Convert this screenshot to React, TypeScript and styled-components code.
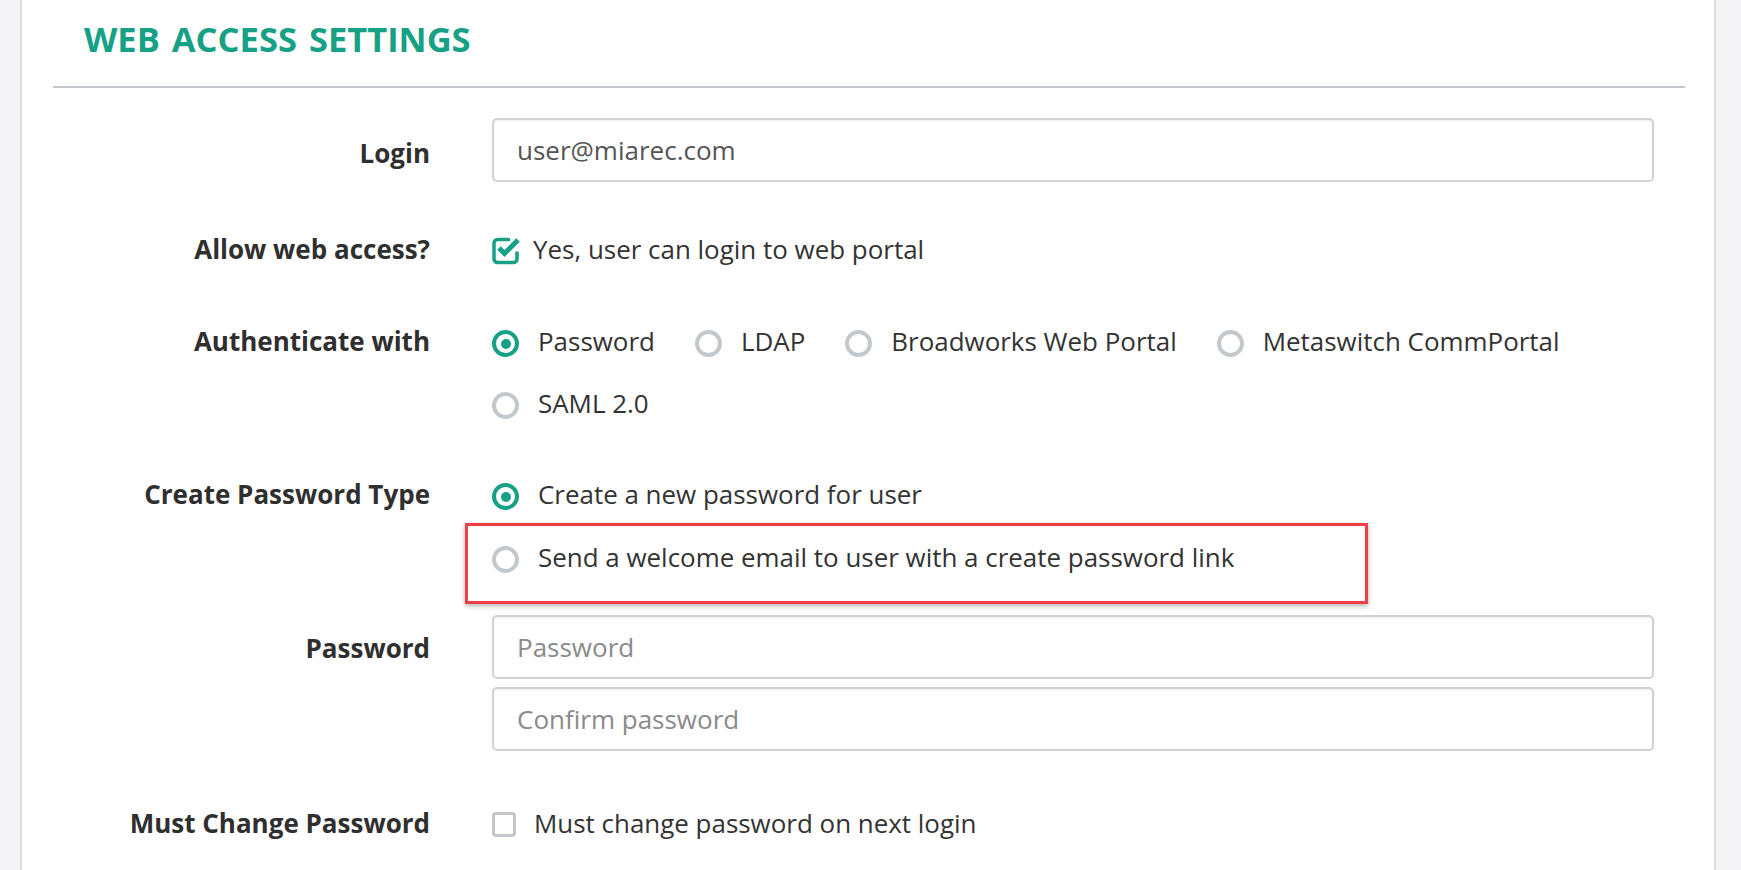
import React from "react";
import styled, { createGlobalStyle } from "styled-components";

const TEAL = "#16a085";
const GREY_RING = "#c3c8cd";

const GlobalStyle = createGlobalStyle`
  html, body {
    margin: 0;
    padding: 0;
    background: #f4f4f6;
  }
  body {
    font-family: "Open Sans", "Liberation Sans", sans-serif;
    color: #333;
  }
`;

const Page = styled.div`
  padding-left: 20px;
  min-height: 870px;
`;

const Panel = styled.div`
  box-sizing: border-box;
  width: 1696px;
  min-height: 870px;
  background: #fff;
  border-left: 2px solid #dedede;
  border-right: 2px solid #dedede;
  padding: 0 29px 0 31px;
  overflow: hidden;
`;

const Heading = styled.h2`
  margin: 15px 0 23px 31px;
  font-size: 34.5px;
  line-height: 48px;
  font-weight: 700;
  color: ${TEAL};
  word-spacing: 3px;
`;

const Divider = styled.div`
  height: 2px;
  background: #c5c9cd;
`;

const Form = styled.div`
  padding-right: 31px;
  padding-top: 30px;
`;

const Row = styled.div<{ $mt?: number }>`
  display: grid;
  grid-template-columns: 377px 1fr;
  column-gap: 62px;
  margin-top: ${(p) => p.$mt ?? 0}px;
`;

const Label = styled.div<{ $pt?: number }>`
  text-align: right;
  font-weight: 700;
  font-size: 26px;
  line-height: 36px;
  color: #2f2f2f;
  padding-top: ${(p) => p.$pt ?? 0}px;
`;

const TextInput = styled.input`
  display: block;
  box-sizing: border-box;
  width: 100%;
  height: 64px;
  border: 2px solid #d2d2d2;
  border-radius: 5px;
  padding: 0 23px;
  font-family: "Open Sans", "Liberation Sans", sans-serif;
  font-size: 26px;
  color: #555;
  background: #fff;
  outline: none;
  box-shadow: inset 0 1px 2px rgba(0, 0, 0, 0.07);

  &::placeholder {
    color: #8a8a8a;
  }
`;

const InputStack = styled.div`
  display: flex;
  flex-direction: column;
  gap: 8px;
`;

const Options = styled.div`
  display: flex;
  flex-wrap: wrap;
  column-gap: 40px;
  row-gap: 26px;
`;

const OptionsColumn = styled.div`
  display: flex;
  flex-direction: column;
  row-gap: 27px;
`;

const Option = styled.label<{ $gap?: number }>`
  position: relative;
  display: flex;
  align-items: flex-start;
  gap: ${(p) => p.$gap ?? 19}px;
  font-size: 25.95px;
  line-height: 36px;
  color: #333;
  white-space: nowrap;
`;

const Radio = styled.span<{ $checked?: boolean }>`
  box-sizing: border-box;
  flex-shrink: 0;
  width: 27px;
  height: 27px;
  margin-top: 7px;
  border-radius: 50%;
  border: 4.5px solid ${(p) => (p.$checked ? TEAL : GREY_RING)};
  display: grid;
  place-items: center;

  &::after {
    content: "";
    width: 10px;
    height: 10px;
    border-radius: 50%;
    background: ${(p) => (p.$checked ? TEAL : "transparent")};
  }
`;

const EmptyBox = styled.span`
  box-sizing: border-box;
  flex-shrink: 0;
  width: 24px;
  height: 25px;
  margin-top: 7px;
  border: 3px solid ${GREY_RING};
  border-radius: 4px;
`;

const CheckedIcon = styled.svg`
  flex-shrink: 0;
  margin-top: 4px;
`;

const Highlight = styled.span`
  position: absolute;
  left: -27px;
  top: -16px;
  width: 903px;
  height: 81px;
  box-sizing: border-box;
  border: 3px solid #ee3f46;
  box-shadow: 0 2px 5px rgba(0, 0, 0, 0.3);
  pointer-events: none;
`;

function CheckedBox() {
  return (
    <CheckedIcon width="30" height="30" viewBox="0 0 30 30">
      <path
        d="M18 4.5 H5.5 a3.5 3.5 0 0 0 -3.5 3.5 v16 a3.5 3.5 0 0 0 3.5 3.5 h16 a3.5 3.5 0 0 0 3.5 -3.5 v-7.5"
        fill="none"
        stroke={TEAL}
        strokeWidth="3.5"
      />
      <path
        d="M7 13 l5.5 5.5 l13.5 -13.5"
        fill="none"
        stroke={TEAL}
        strokeWidth="5"
      />
    </CheckedIcon>
  );
}

const authOptions = [
  { label: "Password", checked: true },
  { label: "LDAP" },
  { label: "Broadworks Web Portal" },
  { label: "Metaswitch CommPortal" },
  { label: "SAML 2.0" },
];

export default function App() {
  return (
    <>
      <GlobalStyle />
      <Page>
        <Panel>
          <Heading>WEB ACCESS SETTINGS</Heading>
          <Divider />
          <Form>
            <Row>
              <Label $pt={17}>Login</Label>
              <TextInput defaultValue="user@miarec.com" />
            </Row>

            <Row $mt={49}>
              <Label>Allow web access?</Label>
              <Option $gap={11}>
                <CheckedBox />
                Yes, user can login to web portal
              </Option>
            </Row>

            <Row $mt={56}>
              <Label>Authenticate with</Label>
              <Options>
                {authOptions.map((o) => (
                  <Option key={o.label}>
                    <Radio $checked={o.checked} />
                    {o.label}
                  </Option>
                ))}
              </Options>
            </Row>

            <Row $mt={55}>
              <Label>Create Password Type</Label>
              <OptionsColumn>
                <Option>
                  <Radio $checked />
                  Create a new password for user
                </Option>
                <Option>
                  <Radio />
                  Send a welcome email to user with a create password link
                  <Highlight />
                </Option>
              </OptionsColumn>
            </Row>

            <Row $mt={40}>
              <Label $pt={15}>Password</Label>
              <InputStack>
                <TextInput type="password" placeholder="Password" />
                <TextInput type="password" placeholder="Confirm password" />
              </InputStack>
            </Row>

            <Row $mt={54}>
              <Label>Must Change Password</Label>
              <Option $gap={18}>
                <EmptyBox />
                Must change password on next login
              </Option>
            </Row>
          </Form>
        </Panel>
      </Page>
    </>
  );
}
